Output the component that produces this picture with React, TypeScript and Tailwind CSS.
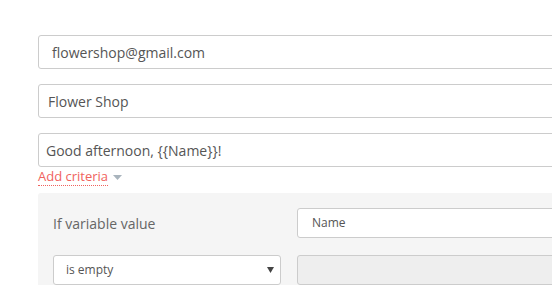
const fieldClass =
  "flex h-[34px] w-full items-center rounded-[3px] border border-[#cccccc] bg-white text-[14px] text-[#555555]";

const App = () => {
  return (
    <div
      className="h-[285px] w-[552px] overflow-hidden bg-white"
      style={{ fontFamily: '"Open Sans", "Liberation Sans", sans-serif' }}
    >
      <div className="flex w-[620px] flex-col pl-[38px] pt-[35px]">
        <div className="flex flex-col gap-[15px]">
          <div className={`${fieldClass} pl-[13px]`}>flowershop@gmail.com</div>
          <div className={`${fieldClass} pl-[9px]`}>Flower Shop</div>
          <div className={`${fieldClass} pl-[7px]`}>Good afternoon, {"{{Name}}"}!</div>
        </div>

        <div className="flex h-[26px] items-start gap-[5px] pt-[1px]">
          <span className="border-b border-dotted border-[#f0625d] text-[13px] leading-[17px] text-[#f0625d]">
            Add criteria
          </span>
          <svg width="9" height="5" viewBox="0 0 9 5" className="mt-[7px]">
            <path d="M0 0 L9 0 L4.5 5 Z" fill="#a9b4bd" />
          </svg>
        </div>

        <div className="flex h-[120px] flex-col gap-[17px] rounded-[3px] bg-[#f5f5f5] pl-[15px] pt-[15px]">
          <div className="flex items-center gap-[16px]">
            <div className="w-[228px] text-[14px] text-[#666666]">If variable value</div>
            <div className="flex h-[30px] flex-1 items-center rounded-[3px] border border-[#cccccc] bg-white pl-[14px] text-[12px] text-[#555555]">
              Name
            </div>
          </div>
          <div className="flex items-center gap-[16px]">
            <div className="flex h-[30px] w-[228px] items-center justify-between rounded-[3px] border border-[#cccccc] bg-white pl-[12px] pr-[6px] text-[12px] text-[#555555]">
              <span>is empty</span>
              <svg width="7" height="6" viewBox="0 0 7 6">
                <path d="M0 0 L7 0 L3.5 6 Z" fill="#444444" />
              </svg>
            </div>
            <div className="h-[30px] flex-1 rounded-[3px] border border-[#cccccc] bg-[#eeeeee]" />
          </div>
        </div>
      </div>
    </div>
  );
};

export default App;
